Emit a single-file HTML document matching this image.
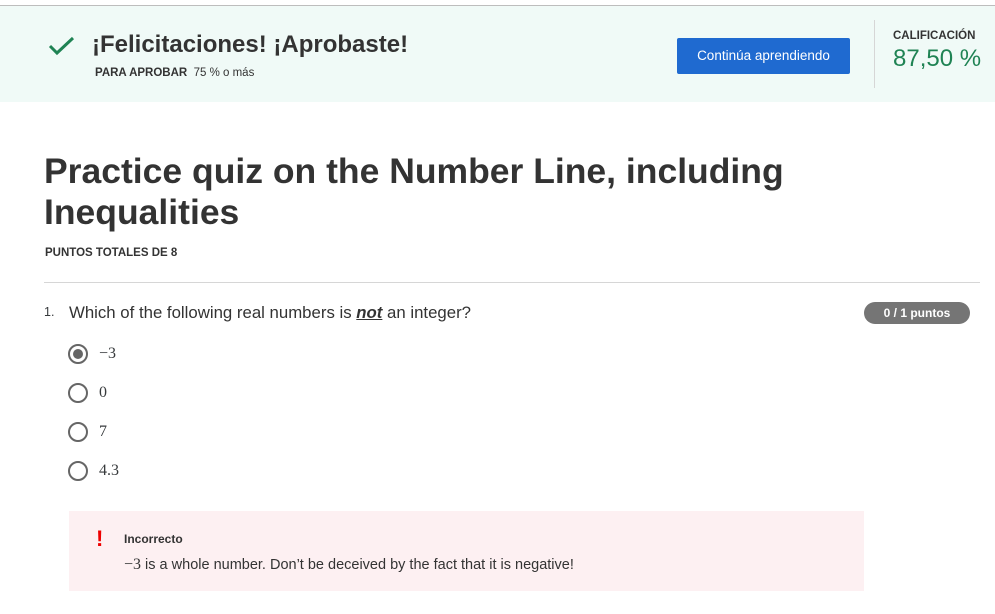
<!DOCTYPE html>
<html><head><meta charset="utf-8"><style>
*{margin:0;padding:0;box-sizing:border-box}
body{width:995px;height:614px;background:#fff;font-family:"Liberation Sans",sans-serif;color:#373a3c;position:relative;overflow:hidden}
.abs{position:absolute}
.banner{left:0;top:5px;width:995px;height:97px;background:#f0faf7;border-top:1px solid #bdbdbd}
.serif{font-family:"Liberation Serif",serif}
.radio{width:20px;height:20px;border:2px solid #666;border-radius:50%}
</style></head><body>
<div class="abs banner"></div>
<svg class="abs" style="left:48px;top:35px" width="28" height="22" viewBox="0 0 28 22"><path d="M2 11 L9 18 L25 3" fill="none" stroke="#1f8354" stroke-width="3"/></svg>
<div class="abs" style="left:92px;top:31px;font-size:24px;font-weight:bold;color:#333">¡Felicitaciones! ¡Aprobaste!</div>
<div class="abs" style="left:95px;top:67px;font-size:11.5px;color:#333"><b>PARA APROBAR</b>&nbsp; 75 % o más</div>
<div class="abs" style="left:677px;top:38px;width:173px;height:36px;background:#1f6ad0;border-radius:2px;color:#fff;font-size:13.5px;text-align:center;line-height:36px">Continúa aprendiendo</div>
<div class="abs" style="left:874px;top:20px;width:1px;height:68px;background:#d6d6d6"></div>
<div class="abs" style="left:893px;top:30px;font-size:11.5px;font-weight:bold;color:#333">CALIFICACIÓN</div>
<div class="abs" style="left:893px;top:45px;font-size:24px;color:#1f8354">87,50 %</div>
<div class="abs" style="left:44px;top:151px;font-size:35.5px;font-weight:bold;color:#333;line-height:41px;width:900px">Practice quiz on the Number Line, including Inequalities</div>
<div class="abs" style="left:45px;top:247px;font-size:11.5px;font-weight:bold;color:#333">PUNTOS TOTALES DE 8</div>
<div class="abs" style="left:44px;top:282px;width:936px;height:1px;background:#d6d6d6"></div>
<div class="abs" style="left:44px;top:305px;font-size:12.5px">1.</div>
<div class="abs" style="left:69px;top:303px;font-size:16.8px;color:#333">Which of the following real numbers is <b><i><u>not</u></i></b> an integer?</div>
<div class="abs" style="left:864px;top:302px;width:106px;height:22px;background:#757575;color:#fff;border-radius:11px;font-size:12px;font-weight:bold;text-align:center;line-height:22px">0 / 1 puntos</div>
<div class="abs radio" style="left:68px;top:344px"></div><div class="abs" style="left:73px;top:349px;width:10px;height:10px;border-radius:50%;background:#666"></div>
<div class="abs serif" style="left:99px;top:345px;font-size:16px">−3</div>
<div class="abs radio" style="left:68px;top:383px"></div><div class="abs serif" style="left:99px;top:384px;font-size:16px">0</div>
<div class="abs radio" style="left:68px;top:422px"></div><div class="abs serif" style="left:99px;top:423px;font-size:16px">7</div>
<div class="abs radio" style="left:68px;top:461px"></div><div class="abs serif" style="left:99px;top:462px;font-size:16px">4.3</div>
<div class="abs" style="left:69px;top:511px;width:795px;height:80px;background:#fdf0f2"></div>
<div class="abs" style="left:96px;top:526px;font-size:22px;font-weight:bold;color:#e00">!</div>
<div class="abs" style="left:124px;top:532px;font-size:12px;font-weight:bold;color:#333">Incorrecto</div>
<div class="abs" style="left:124px;top:556px;font-size:14.5px;color:#333"><span class="serif" style="font-size:16px">−3</span> is a whole number. Don’t be deceived by the fact that it is negative!</div>
</body></html>
